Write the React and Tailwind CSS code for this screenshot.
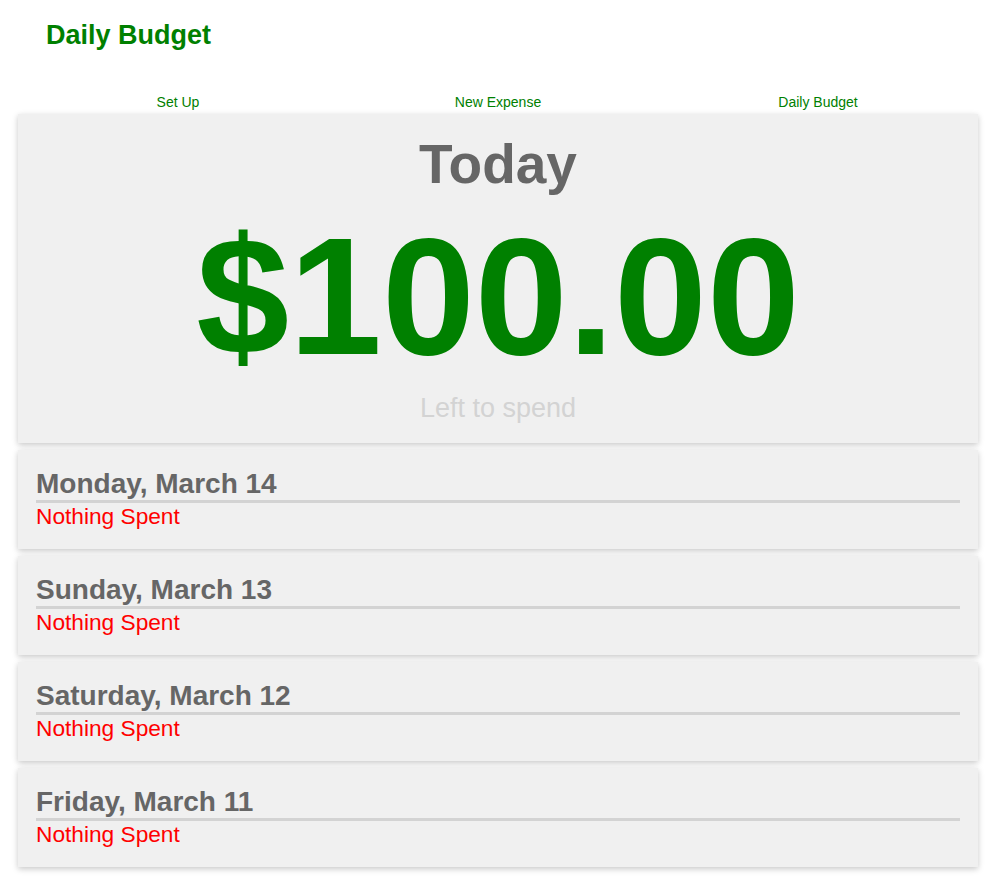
const days = ["Monday, March 14", "Sunday, March 13", "Saturday, March 12", "Friday, March 11"]

const links = ["Set Up", "New Expense", "Daily Budget"]

function DayCard({ label }) {
    return (<div className="h-[99px] bg-[#f0f0f0] px-[18px] pt-[20px] shadow-[0_2px_6px_rgba(0,0,0,0.22)]">
        <h2 className="text-[28px] leading-none font-bold text-[#666666] pb-[2px] border-b-[3px] border-[#d3d3d3]">{label}</h2>
        <p className="mt-[2px] text-[22.7px] leading-none text-[#ff0000]">Nothing Spent</p>
    </div>)
}

export default function App() {
    return (<div className="min-h-screen bg-white font-['Liberation_Sans',Arial,sans-serif] pb-2">
        <h1 className="pt-[22px] pl-[46px] text-[27px] leading-none font-bold text-[#008000]">Daily Budget</h1>

        <div className="mx-[18px] mt-[45px] w-[960px]">
            <nav className="grid grid-cols-3 text-[14px] leading-[16px] text-[#008000] text-center">
                {links.map(link => (
                    <a key={link} className="cursor-pointer">{link}</a>
                ))}
            </nav>

            <div className="mt-[4px] flex flex-col gap-[7px]">
                <div className="h-[329px] bg-[#f0f0f0] pt-[23px] flex flex-col items-center shadow-[0_2px_6px_rgba(0,0,0,0.22)]">
                    <h2 className="text-[55px] leading-none font-bold text-[#666666]">Today</h2>
                    <div className="mt-[21px] text-[167px] leading-none font-bold text-[#008000]">$100.00</div>
                    <p className="mt-[15px] text-[27px] leading-none text-[#d3d3d3]">Left to spend</p>
                </div>

                {days.map(day => (
                    <DayCard key={day} label={day}/>
                ))}
            </div>
        </div>
    </div>)
}
